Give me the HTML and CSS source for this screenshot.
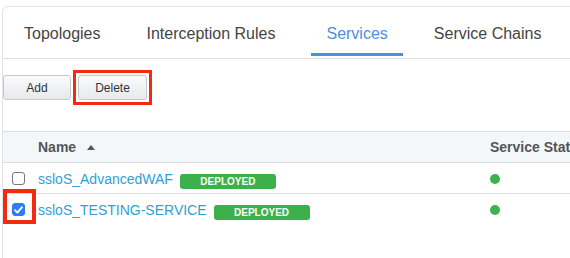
FILE: index.html
```html
<!DOCTYPE html>
<html>
<head>
<meta charset="utf-8">
<title>SSL Orchestrator - Services</title>
<link rel="stylesheet" href="styles.css">
</head>
<body>
<div class="panel">
	<!-- tab strip -->
	<nav class="tabs">
		<a class="tab">Topologies</a>
		<a class="tab tab-wide">Interception Rules</a>
		<a class="tab active">Services</a>
		<a class="tab">Service Chains</a>
	</nav>

	<!-- action buttons -->
	<div class="toolbar">
		<button class="btn btn-add">Add</button>
		<span class="marked"><button class="btn btn-delete">Delete</button></span>
	</div>

	<!-- services list -->
	<div class="list">
		<div class="row head">
			<div class="cell check"></div>
			<div class="cell name">Name <span class="sort-up"></span></div>
			<div class="cell status">Service Status</div>
		</div>
		<div class="row">
			<div class="cell check"><span class="box"></span></div>
			<div class="cell name"><a class="link">ssloS_AdvancedWAF</a><span class="badge">DEPLOYED</span></div>
			<div class="cell status"><span class="dot"></span></div>
		</div>
		<div class="row">
			<div class="cell check">
				<span class="box checked"><svg width="9" height="8" viewBox="0 0 9 8"><path d="M1 4.2 L3.4 6.6 L8 1.2" fill="none" stroke="#fff" stroke-width="1.9" stroke-linecap="round" stroke-linejoin="round"/></svg></span>
				<span class="marker"></span>
			</div>
			<div class="cell name"><a class="link">ssloS_TESTING-SERVICE</a><span class="badge">DEPLOYED</span></div>
			<div class="cell status"><span class="dot"></span></div>
		</div>
	</div>
</div>
</body>
</html>
```

FILE: styles.css
```css
html, body {
	margin: 0;
	overflow: hidden;
	background-color: #fff;
}
body {
	font-family: "Liberation Sans", Arial, sans-serif;
	color: #333;
}
.panel {
	margin: 6px 0 0 2px;
	width: 660px;
	height: 300px;
	border-top: 1px solid #e3e3e3;
	border-left: 1px solid #e3e3e3;
	border-top-left-radius: 6px;
}

/* tabs */
.tabs {
	display: flex;
	padding: 0 0 2px 6px;
	border-bottom: 1px solid #dedede;
}
.tab {
	padding: 17px 15px 9px;
	margin-right: 16px;
	font-size: 16px;
	line-height: 20px;
	color: #444;
	border-bottom: 3px solid transparent;
}
.tab-wide {
	margin-right: 21px;
}
.tab.active {
	color: #4a90e2;
	border-bottom-color: #4a90e2;
}

/* buttons */
.toolbar {
	display: flex;
	align-items: center;
	gap: 2px;
	padding-top: 11px;
}
.btn {
	height: 25px;
	padding: 0;
	font-family: "Liberation Sans", Arial, sans-serif;
	font-size: 12px;
	color: #2e3440;
	border: 1px solid #c5c8cd;
	border-radius: 3px;
	background: linear-gradient(#fbfbfc, #e7e9ec);
}
.btn-add {
	width: 68px;
}
.btn-delete {
	display: block;
	width: 69px;
}
.marked {
	padding: 2px;
	border: 3px solid #f42a10;
}

/* list */
.list {
	margin-top: 26px;
	border-top: 1px solid #dcdcdc;
}
.row {
	display: grid;
	grid-template-columns: 35px 452px 1fr;
	height: 30px;
	border-bottom: 1px solid #dedede;
}
.row:last-child {
	border-bottom: none;
}
.row.head {
	background-color: #f4f7fa;
	font-size: 14px;
	font-weight: bold;
	color: #555;
}
.cell {
	display: flex;
	align-items: center;
}
.row.head .cell {
	white-space: nowrap;
}
.sort-up {
	margin-left: 11px;
	width: 0;
	height: 0;
	border-left: 4px solid transparent;
	border-right: 4px solid transparent;
	border-bottom: 5px solid #555;
}
.check {
	position: relative;
	padding-left: 9px;
}
.box {
	display: flex;
	align-items: center;
	justify-content: center;
	box-sizing: border-box;
	width: 13px;
	height: 13px;
	border: 1px solid #777;
	border-radius: 3px;
	background-color: #fff;
}
.box.checked {
	border-color: #2f7cf6;
	background-color: #2f7cf6;
}
.marker {
	position: absolute;
	left: 0;
	top: -5px;
	width: 33px;
	height: 35px;
	box-sizing: border-box;
	border: 4px solid #f42a10;
}
.row .name {
	display: block;
	padding-top: 1px;
	line-height: 30px;
	font-size: 14px;
	white-space: nowrap;
}
.row.head .name {
	display: flex;
	padding-top: 0;
}
.link {
	color: #2f9fd8;
}
.badge {
	display: inline-block;
	vertical-align: -1px;
	margin-left: 7px;
	padding: 0 20px;
	width: 56px;
	height: 15px;
	line-height: 15px;
	text-align: center;
	font-size: 10px;
	font-weight: bold;
	color: #fff;
	background-color: #3cb04a;
	border-radius: 3px;
}
.dot {
	width: 10px;
	height: 10px;
	border-radius: 50%;
	background-color: #3cb44b;
}
```
